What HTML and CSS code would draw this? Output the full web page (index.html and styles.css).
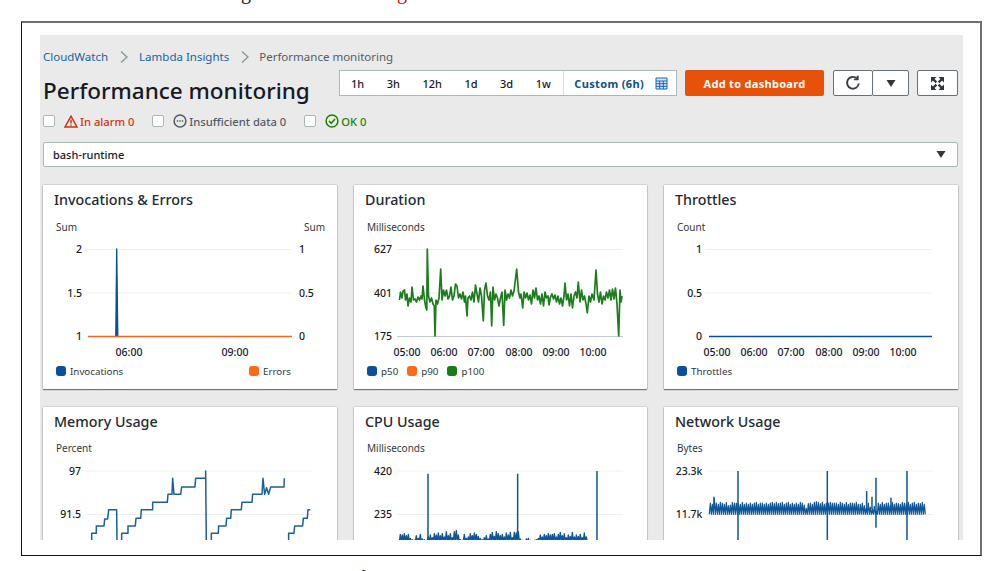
FILE: index.html
```html
<!DOCTYPE html>
<html lang="en">
<head>
<meta charset="utf-8">
<title>Performance monitoring</title>
<link rel="stylesheet" href="styles.css">
</head>
<body>
<div class="cut-top"><span class="cut-a">g</span><span class="cut-b">g</span></div>
<div class="frame">
  <main class="panel">
    <nav class="crumbs">
      <a class="crumb-link">CloudWatch</a>
      <svg class="crumb-sep" width="10" height="14" viewBox="0 0 10 14"><path d="M2 1.500 8 7l-6 5.500"/></svg>
      <a class="crumb-link">Lambda Insights</a>
      <svg class="crumb-sep" width="10" height="14" viewBox="0 0 10 14"><path d="M2 1.500 8 7l-6 5.500"/></svg>
      <span class="crumb-current">Performance monitoring</span>
    </nav>
    <header class="head">
      <h1 class="title">Performance monitoring</h1>
      <div class="range">
        <span class="range-item">1h</span>
        <span class="range-item">3h</span>
        <span class="range-item">12h</span>
        <span class="range-item">1d</span>
        <span class="range-item">3d</span>
        <span class="range-item">1w</span>
        <span class="range-custom">Custom (6h)
          <svg width="13" height="13" viewBox="0 0 13 13"><path class="cal" d="M1 1h11v11H1zM1 4h11M1 6.700h11M1 9.300h11M4.700 4v8M8.300 4v8"/></svg>
        </span>
      </div>
      <button class="primary">Add to dashboard</button>
      <div class="btn-group">
        <button class="icon-btn refresh"><svg width="16" height="16" viewBox="0 0 16 16"><path class="stroke" d="M13.800 8.500A5.900 5.900 0 1 1 11.900 3.400"/><path class="stroke" d="M12.700 .8v3.600H9.100"/></svg></button>
        <button class="icon-btn caret-btn"><svg width="10" height="7" viewBox="0 0 10 7"><path d="M.5 0h9L5 7z"/></svg></button>
      </div>
      <button class="icon-btn full"><svg width="13" height="13" viewBox="0 0 13 13"><path class="fs-head" d="M0 0h5.500L0 5.500zM13 0v5.500L7.500 0zM0 13V7.500L5.500 13zM13 13H7.500L13 7.500z"/><path class="fs-stem" d="M2 2 5.400 5.400M11 2 7.600 5.400M2 11 5.400 7.600M11 11 7.600 7.600"/></svg></button>
    </header>
    <div class="filters">
      <label class="filter alarm"><span class="check"></span>
        <svg width="14" height="13" viewBox="0 0 14 13"><path class="stroke" d="M7 1.200 13 12H1zM7 4.500v4M7 9.500v1.300"/></svg>
        <span>In alarm 0</span></label>
      <label class="filter insufficient"><span class="check"></span>
        <svg width="14" height="14" viewBox="0 0 14 14"><circle class="stroke" cx="7" cy="7" r="5.900"/><path class="stroke" d="M3.800 7h1.400M6.300 7h1.400M8.800 7h1.400"/></svg>
        <span>Insufficient data 0</span></label>
      <label class="filter ok"><span class="check"></span>
        <svg width="14" height="14" viewBox="0 0 14 14"><circle class="stroke" cx="7" cy="7" r="5.900"/><path class="stroke" d="M4 7l2.200 2.300L10 5"/></svg>
        <span>OK 0</span></label>
    </div>
    <div class="select"><span>bash-runtime</span><svg width="10" height="7" viewBox="0 0 10 7"><path d="M.5 0h9L5 7z"/></svg></div>

    <section class="grid">
      <article class="card">
        <h2>Invocations &amp; Errors</h2>
        <svg class="chart" width="294" height="145" viewBox="43 215 294 145">
          <text class="unit" x="56" y="231">Sum</text>
          <text class="unit end" x="325" y="231">Sum</text>
          <path class="gridline" d="M85 249.500H292M85 293H292"/>
          <text class="axis end" x="82" y="253">2</text>
          <text class="axis end" x="82" y="297">1.5</text>
          <text class="axis end" x="82" y="340">1</text>
          <text class="axis" x="299" y="253">1</text>
          <text class="axis" x="299" y="297">0.5</text>
          <text class="axis" x="299" y="340">0</text>
          <path class="line navy" d="M115.800 336.500 116.700 249 117.800 336.500"/>
          <path class="line orange" d="M88 336.500H292"/>
          <text class="axis mid" x="129" y="356">06:00</text>
          <text class="axis mid" x="235" y="356">09:00</text>
        </svg>
        <div class="legend spread">
          <span class="key"><i class="sw sw-blue"></i>Invocations</span>
          <span class="key"><i class="sw sw-orange"></i>Errors</span>
        </div>
      </article>

      <article class="card">
        <h2>Duration</h2>
        <svg class="chart" width="293" height="145" viewBox="354 215 293 145">
          <text class="unit" x="367" y="231">Milliseconds</text>
          <path class="gridline" d="M397 249.500H623M397 293H623"/>
          <path class="gridline dark" d="M397 336.500H623"/>
          <text class="axis end" x="392" y="253">627</text>
          <text class="axis end" x="392" y="297">401</text>
          <text class="axis end" x="392" y="340">175</text>
          <polyline class="line green" points="399.500,300 400.500,292 402,298 403,291 404.500,290 405.500,300 407,294 408,306 409.500,298 411,302 412,287 413.500,300 415,299 416.500,302 418,297 419.500,300 421,296 422,299 423,286 424.500,300 426,308 426.800,310 427.300,249 428.500,296 430,302 431.500,298 433,304 434.300,306 435,336 436,300 437.500,304 439,298 440.700,269 442,300 443.500,290 445,296 446.500,290 448,299 449.500,296 451,287 452.500,300 454,296 455.500,284 457,286 458.500,298 460,294 461.500,299 463,292 464.500,302 465.500,296 467,316 468,298 469.500,296 471,300 472.500,292 474,302 475.500,285 477,294 478.500,302 480,288 481.500,296 483.300,321 484.500,290 486,283 487.500,296 489,300 490.500,292 491.700,326 493,287 494.500,300 496,294 497.500,298 499,306 500.500,298 502,292 503.700,325.500 505,290 506.500,300 508,294 509.500,298 511,290 512.500,296 514,291 516.700,269 518.500,292 520,298 521,294 522.700,308 524,292 525.500,298 527,293 528.500,300 530,295 531.500,304 533,290 534.500,298 536,288 537.500,300 539,296 540.500,304 542,294 543.500,306 545,292 546.500,298 548,296 549,305 550.500,297 552,294 553.500,299 555,295 556.500,302 558,296 559.500,304 561,298 562.500,306 564,296 565,283 566.500,300 568,294 569.500,306 571,294 572.500,308 574,296 575.500,292 577,298 578.300,282 580,302 581.500,290 583,300 584.500,296 586,304 587.300,313 589,296 590.500,302 592,294 594,300 596,270 597.500,294 599,302 600.500,292 602,304 603.500,296 605,300 606.500,292 608,298 609.500,290 611,300 612.500,289 614,299 615.500,288 617,304 618.700,336 620,290 621,302 622,296"/>
          <text class="axis mid" x="407" y="356">05:00</text>
          <text class="axis mid" x="444" y="356">06:00</text>
          <text class="axis mid" x="481" y="356">07:00</text>
          <text class="axis mid" x="519" y="356">08:00</text>
          <text class="axis mid" x="556" y="356">09:00</text>
          <text class="axis mid" x="593" y="356">10:00</text>
        </svg>
        <div class="legend">
          <span class="key"><i class="sw sw-blue"></i>p50</span>
          <span class="key"><i class="sw sw-orange"></i>p90</span>
          <span class="key"><i class="sw sw-green"></i>p100</span>
        </div>
      </article>

      <article class="card">
        <h2>Throttles</h2>
        <svg class="chart" width="294" height="145" viewBox="664 215 294 145">
          <text class="unit" x="677" y="231">Count</text>
          <path class="gridline" d="M705 249.500H932M705 293H932"/>
          <text class="axis end" x="702" y="253">1</text>
          <text class="axis end" x="702" y="297">0.5</text>
          <text class="axis end" x="702" y="340">0</text>
          <path class="line navy" d="M709 336.500H932"/>
          <text class="axis mid" x="717" y="356">05:00</text>
          <text class="axis mid" x="754" y="356">06:00</text>
          <text class="axis mid" x="791" y="356">07:00</text>
          <text class="axis mid" x="829" y="356">08:00</text>
          <text class="axis mid" x="866" y="356">09:00</text>
          <text class="axis mid" x="903" y="356">10:00</text>
        </svg>
        <div class="legend">
          <span class="key"><i class="sw sw-blue"></i>Throttles</span>
        </div>
      </article>

      <article class="card">
        <h2>Memory Usage</h2>
        <svg class="chart" width="294" height="103" viewBox="43 437 294 103">
          <text class="unit" x="56" y="452">Percent</text>
          <path class="gridline" d="M85 471H312M85 514.500H312"/>
          <text class="axis end" x="81" y="475">97</text>
          <text class="axis end" x="81" y="518">91.5</text>
          <g class="zoomed">
            <path class="zline steps" d="M275 440V415H289V393H312L314 372H323L326 344H350L351 440M365 440V415H384V393H406L408 370H422L424 344H458V322H502L504 298H516L518 250 522 298H542L545 276H585L587 250H617V228L619 440M634 440V415H655L656 393H678L680 370H692L694 344H724L726 322H756L758 298H786L789 250 794 298 800 278 806 298 812 276H852L853 250M866 440V415H882L884 393H908L910 370H922L924 344H931"/>
          </g>
        </svg>
      </article>

      <article class="card">
        <h2>CPU Usage</h2>
        <svg class="chart" width="293" height="103" viewBox="354 437 293 103">
          <text class="unit" x="367" y="452">Milliseconds</text>
          <path class="gridline" d="M397 471H623M397 514.500H623"/>
          <text class="axis end" x="392" y="475">420</text>
          <text class="axis end" x="392" y="518">235</text>
          <g class="zoomed">
            <path class="zline thick" d="M148 440l3-22 3 22 3-20 3 20 3-24 3 24 3-18 3 18 3-22 3 22 3-10 3 10 3-6 3 6 3-5 3 5 3-18 3 18 3-10 3 10 3-22 3 22 3-8 3 8 3-6 3 6 3-4 3 4 3-14 3 14 3-20 3 20 3-12 3 12 3-24 3 24 3-20 3 20 3-26 3 26 3-18 3 18 3-24 3 24 3-14 3 14 3-30 3 30 3-18 3 18 3-24 3 24 3-12 3 12 3-30 3 30 3-34 3 34 3-20 3 20 3-6 3 6 3-4 3 4 3-22 3 22 3-10 3 10 3-14 3 14 3-24 3 24 3-18 3 18 3-26 3 26 3-22 3 22 3-16 3 16 3-10 3 10 3-6 3 6 3-12 3 12 3-18 3 18 3-8 3 8 3-22 3 22 3-28 3 28 3-16 3 16 3-30 3 30 3-24 3 24 3-18 3 18 3-22 3 22 3-14 3 14 3-26 3 26 3-20 3 20 3-28 3 28 3-12 3 12 3-28 3 28 3-26 3 26 3-30 3 30 3-8 3 8 3-4 3 4 3-2 3 2 3-8 3 8 3-10 3 10 3-4 3 4 3-2 3 2 3-4 3 4 3-6 3 6 3-10 3 10 3-20 3 20 3-14 3 14 3-22 3 22 3-18 3 18 3-24 3 24 3-20 3 20 3-22 3 22 3-24 3 24 3-14 3 14 3-22 3 22 3-28 3 28 3-18 3 18 3-24 3 24 3-12 3 12 3-20 3 20 3-16 3 16 3-28 3 28 3-14 3 14 3-20 3 20 3-16 3 16 3-22 3 22 3-12 3 12 3-26 3 26 3-14 3 14"/>
            <path class="zline spike" d="M234 436V236M503 436V236M741 436V228"/>
          </g>
        </svg>
      </article>

      <article class="card">
        <h2>Network Usage</h2>
        <svg class="chart" width="294" height="103" viewBox="664 437 294 103">
          <text class="unit" x="677" y="452">Bytes</text>
          <path class="gridline" d="M707 471H933M707 514.500H933"/>
          <text class="axis end" x="702.500" y="475">23.3k</text>
          <text class="axis end" x="702.500" y="518">11.7k</text>
          <g class="zoomed">
            <path class="zline band" d="M148 358l3-34 3 34 3-30 3 30 3-46 3 46 3-34 3 34 3-30 3 30 3-36 3 36 3-34 3 34 3-30 3 30 3-36 3 36 3-26 3 26 3-28 3 28 3-36 3 36 3-34 3 34 3-34 3 34 3-32 3 32 3-30 3 30 3-36 3 36 3-30 3 30 3-34 3 34 3-30 3 30 3-34 3 34 3-30 3 30 3-34 3 34 3-36 3 36 3-30 3 30 3-34 3 34 3-34 3 34 3-30 3 30 3-34 3 34 3-30 3 30 3-34 3 34 3-36 3 36 3-32 3 32 3-36 3 36 3-32 3 32 3-34 3 34 3-36 3 36 3-30 3 30 3-34 3 34 3-36 3 36 3-30 3 30 3-34 3 34 3-30 3 30 3-34 3 34 3-30 3 30 3-36 3 36 3-34 3 34 3-28 3 28 3-18 3 18 3-32 3 32 3-34 3 34 3-30 3 30 3-36 3 36 3-38 3 38 3-36 3 36 3-32 3 32 3-36 3 36 3-30 3 30 3-34 3 34 3-34 3 34 3-36 3 36 3-34 3 34 3-34 3 34 3-34 3 34 3-30 3 30 3-36 3 36 3-34 3 34 3-30 3 30 3-36 3 36 3-30 3 30 3-34 3 34 3-34 3 34 3-32 3 32 3-36 3 36 3-30 3 30"/>
            <path class="zline band" d="M598 358l3-30 3 30 3-34 3 34 3-26 3 26 3-20 3 20 3-34 3 34 3-22 3 22 3-16 3 16 3-24 3 24 3-10 3 10 3-34 3 34 3-30 3 30 3-36 3 36 3-30 3 30 3-34 3 34 3-34 3 34 3-28 3 28 3-36 3 36 3-30 3 30 3-34 3 34 3-32 3 32 3-30 3 30 3-36 3 36 3-34 3 34 3-32 3 32 3-36 3 36 3-30 3 30 3-34 3 34 3-36 3 36 3-30 3 30 3-34 3 34 3-32 3 32 3-36 3 36 3-30 3 30"/>
            <path class="zline spike" d="M234 436V228M502 436V228M741 436V228M620 350V288M636 342V305M648 398V248M693 340V308M162 340V305"/>
          </g>
        </svg>
      </article>
    </section>
  </main>
</div>
<div class="cut-bottom"><span class="m1">d</span><span class="m2">h</span><span class="m3">l</span><span class="m4">f</span><span class="m5">d</span><span class="m6">l</span><span class="m7">h</span><span class="m8">d</span><span class="m9">b</span><span class="m10">l</span></div>
</body>
</html>
```

FILE: styles.css
```css
* { box-sizing: border-box; }
html, body { margin: 0; height: 571px; overflow: hidden; background: #fff; }
body { font-family: "Noto Sans", "Open Sans", sans-serif; color: #16191f; padding: 0 15px 0 21px; }

.cut-top { display: flex; height: 21px; overflow: hidden; font: 20px/20px "Liberation Serif", serif; }
.cut-top span { margin-top: -18px; }
.cut-a { margin-left: 220px; color: #111; }
.cut-b { margin-left: 146px; color: #b01010; }

.cut-bottom { display: flex; height: 15px; overflow: hidden; padding-top: 12px; font: 20px/20px "Liberation Serif", serif; color: #222; }
.m1 { margin-left: 174px; }
.m2 { margin-left: 6px; }
.m3 { margin-left: 64px; }
.m4 { margin-left: 68px; }
.m5 { margin-left: 226px; }
.m6 { margin-left: 10px; }
.m7 { margin-left: 20px; }
.m8 { margin-left: 41px; }
.m9 { margin-left: 7px; }
.m10 { margin-left: 93px; }

.frame {
  display: flex;
  width: 961px;
  height: 535px;
  padding: 12px 17px 15px 18px;
  border-style: solid;
  border-color: #707070 #707070 #111 #111;
  border-width: 2px 2px 1px 1px;
}
.panel { flex: 1; overflow: hidden; background: #eaeaea; padding: 0 5px 0 3px; }

.crumbs { display: flex; align-items: center; height: 16px; margin-top: 14px; font-size: 11.500px; line-height: 16px; }
.crumb-link { color: #16639f; }
.crumb-current { color: #545b64; margin-left: 8px; }
.crumb-sep { margin-left: 11px; margin-right: 1px; fill: none; stroke: #879596; stroke-width: 1.300; }
.crumb-link + .crumb-sep + .crumb-link { margin-left: 9px; }

.head { display: flex; align-items: flex-start; height: 37px; margin-top: 5px; }
.title { width: 296px; margin: 5px 0 0; font-size: 22.500px; line-height: 32px; font-weight: 500; color: #16191f; }

.range { display: flex; align-items: center; gap: 22.500px; width: 338px; height: 26px; padding-left: 11px; background: #fff; border: 1px solid #aab7b8; font-size: 11px; font-weight: 500; }
.range-custom { display: flex; align-items: center; justify-content: space-between; flex: 1; height: 100%; margin-left: -10px; padding: 0 8px 0 10px; border-left: 1px solid #d8e0e6; color: #0a4f8f; font-weight: 700; font-size: 11px; letter-spacing: .35px; }
.cal { fill: #dbe9f5; stroke: #1166bb; stroke-width: 1; }

.primary { width: 139px; height: 26px; margin-left: 8px; border: 0; border-radius: 2px; background: #e8510a; color: #fff; font: 700 11px "Noto Sans", sans-serif; letter-spacing: .3px; padding: 0; }

.btn-group { display: flex; margin-left: 9px; }
.icon-btn { display: flex; align-items: center; justify-content: center; height: 26px; padding: 0; background: #fff; border: 1px solid #687078; border-radius: 2px; }
.refresh { width: 40px; }
.caret-btn { width: 37px; margin-left: -1px; }
.caret-btn path, .select path { fill: #32373c; }
.refresh .stroke { fill: none; stroke: #3a3f45; stroke-width: 1.900; }
.full { width: 41px; margin-left: 8px; }
.fs-head { fill: #32373c; }
.fs-stem { fill: none; stroke: #32373c; stroke-width: 2.300; }

.filters { display: flex; align-items: center; height: 14px; margin-top: 7px; font-size: 11.200px; font-weight: 500; }
.filter { display: flex; align-items: center; }
.filter .stroke { fill: none; stroke: currentColor; stroke-width: 1.500; }
.check { width: 12px; height: 12px; margin-right: 9px; background: #fff; border: 1px solid #aab7b8; border-radius: 2px; }
.alarm { color: #d13212; }
.alarm svg { margin-right: 2px; }
.insufficient { color: #545b64; margin-left: 18px; }
.insufficient svg { margin-right: 2px; }
.ok { color: #1d8102; margin-left: 18px; }
.ok svg { margin-right: 2px; }

.select { display: flex; align-items: center; justify-content: space-between; height: 25px; margin-top: 14px; padding: 0 11px 0 9px; background: #fff; border: 1px solid #aab7b8; border-radius: 2px; font-size: 11px; font-weight: 500; }

.grid { display: grid; grid-template-columns: 294px 293px 294px; column-gap: 17px; row-gap: 18px; margin-top: 18px; }
.card { height: 204px; background: #fff; box-shadow: 0 1px 1px rgba(0, 0, 0, .45), 0 0 1.500px rgba(0, 0, 0, .35); }
.card h2 { height: 30px; margin: 0; padding-left: 11px; font-size: 14.300px; line-height: 30px; font-weight: 500; color: #232a31; }

.chart { display: block; font-family: "Noto Sans", sans-serif; }
.unit { font-size: 10px; fill: #32373c; }
.axis { font-size: 10.500px; font-weight: 500; fill: #16191f; }
.end { text-anchor: end; }
.mid { text-anchor: middle; }
.gridline { stroke: #eef0f1; stroke-width: 1; fill: none; }
.gridline.dark { stroke: #c5c9cc; }
.line { fill: none; stroke-width: 1.300; stroke-linejoin: round; }
.line.navy { stroke: #0a4f94; fill: #0a4f94; }
.line.orange { stroke: #e9692c; }
.line.green { stroke: #1d7c1d; stroke-width: 1.700; }
.zoomed { transform: translate(0, 395px) scale(.3333); }
.card:nth-child(5) .zoomed { transform: translate(350px, 395px) scale(.3333); }
.card:nth-child(6) .zoomed { transform: translate(660px, 395px) scale(.3333); }
.zline { fill: none; stroke-linejoin: round; }
.steps { stroke: #1a5f9f; stroke-width: 4.500; }
.thick { stroke-width: 4; stroke: #0f5598; }
.band { stroke-width: 3.500; stroke: #0f5598; }
.spike { stroke-width: 4.500; stroke: #0f5598; }

.legend { display: flex; align-items: center; gap: 9px; height: 22px; padding: 0 13px; font-size: 9.800px; color: #32373c; }
.spread { justify-content: space-between; padding-right: 46px; }
.key { display: flex; align-items: center; gap: 4px; }
.sw { width: 10px; height: 10px; border-radius: 3px; }
.sw-blue { background: #0a4f9e; }
.sw-orange { background: #ff6a13; }
.sw-green { background: #177d17; }
```
